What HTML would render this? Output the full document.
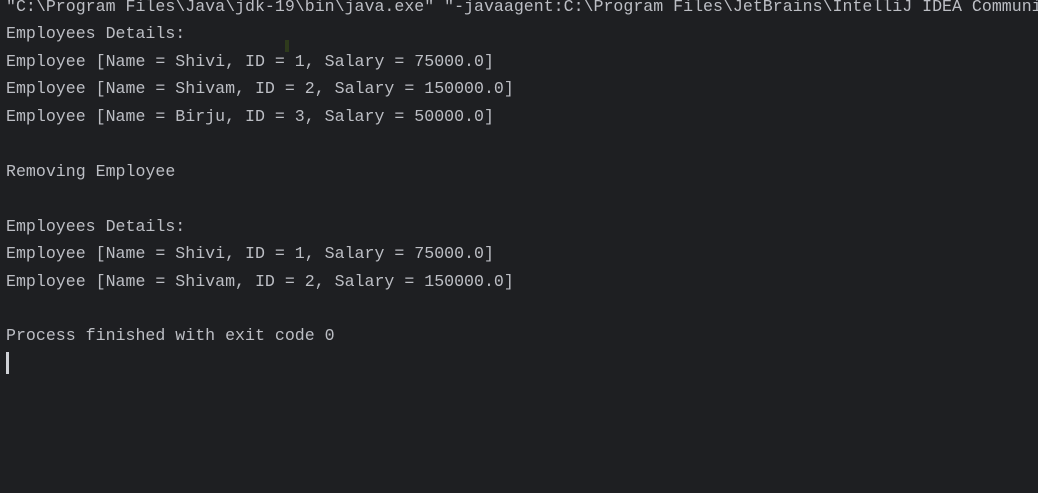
<!DOCTYPE html>
<html><head><meta charset="utf-8"><style>
html,body{margin:0;padding:0;background:#1e1f22;width:1038px;height:493px;overflow:hidden}
pre{margin:0;position:absolute;left:6px;top:-7px;font-family:"Liberation Mono","DejaVu Sans Mono",monospace;font-size:16.6px;line-height:27.45px;color:#bcbec4;white-space:pre}
.cur{position:absolute;left:6px;top:352px;width:3px;height:22px;background:#cfd1d6}
.mk{position:absolute;left:285px;top:40px;width:4px;height:12px;background:#2e3a1c}
</style></head><body>
<pre>"C:\Program Files\Java\jdk-19\bin\java.exe" "-javaagent:C:\Program Files\JetBrains\IntelliJ IDEA Community
Employees Details:
Employee [Name = Shivi, ID = 1, Salary = 75000.0]
Employee [Name = Shivam, ID = 2, Salary = 150000.0]
Employee [Name = Birju, ID = 3, Salary = 50000.0]

Removing Employee

Employees Details:
Employee [Name = Shivi, ID = 1, Salary = 75000.0]
Employee [Name = Shivam, ID = 2, Salary = 150000.0]

Process finished with exit code 0</pre>
<div class="mk"></div>
<div class="cur"></div>
</body></html>
